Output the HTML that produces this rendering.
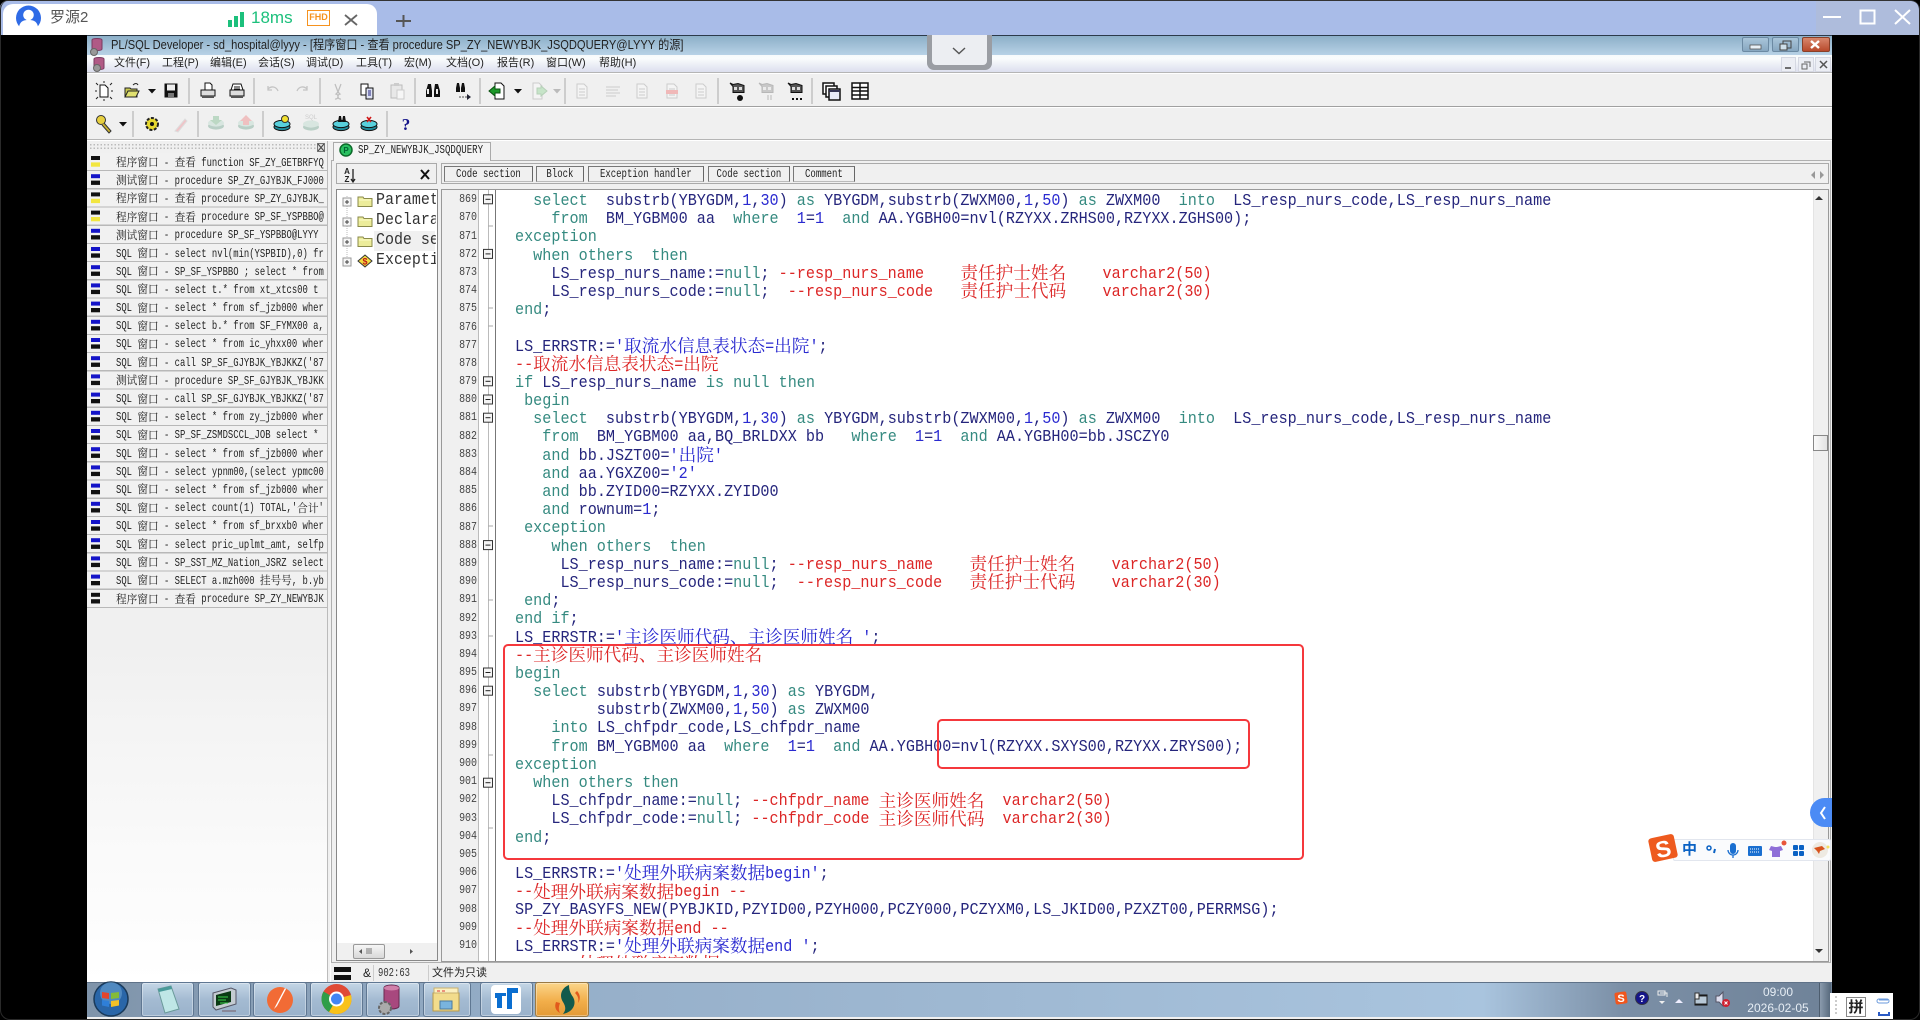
<!DOCTYPE html>
<html lang="zh"><head><meta charset="utf-8"><title>PL/SQL Developer</title>
<style>
html,body{margin:0;padding:0;background:#000}
body{width:1920px;height:1020px;overflow:hidden;position:relative;font-family:"Liberation Sans","Noto Sans CJK SC",sans-serif}
.a{position:absolute;box-sizing:border-box}
.m{position:absolute;top:55px;height:17px;line-height:17px;font-size:11px;color:#222;white-space:nowrap}
.mono{font-family:"Liberation Mono","Noto Serif CJK SC",monospace}
#code{position:absolute;left:19.4px;top:3px;width:1500px;transform:scaleX(.891);transform-origin:0 0;font:17px/18.2px "Liberation Mono",monospace;color:#25257c}
#code div{height:18.2px;white-space:pre}
#code b{font-weight:normal;color:#358a80}
#code em{font-style:normal;color:#2a2ad0}
#code s{text-decoration:none;color:#dc2626}
#code i{font:normal 19.8px/0 "Noto Serif CJK SC",serif;display:inline-block;transform:scaleY(.9);position:relative;top:2.5px}
#list{position:absolute;left:0;top:1px;width:300px;transform:scaleX(.74);transform-origin:0 0;font:12px/18.2px "Liberation Mono",monospace;color:#222}
#list div{height:18.2px;white-space:pre}
#list i{font:normal 14.4px/0 "Noto Serif CJK SC",serif;display:inline-block;transform:scaleY(.78);position:relative;top:1.5px}
#nums{position:absolute;left:442px;top:190.2px;width:35px;text-align:right;font:12px/18.2px "Liberation Mono",monospace;color:#444}
#nums div{height:18.2px;transform:scaleX(.83);transform-origin:100% 0}
.btn{position:absolute;top:166px;height:16px;background:#f0f0f0;border:1px solid #777;border-right-color:#666;border-bottom-color:#bbb;box-sizing:border-box;overflow:hidden}
.btn span{position:absolute;left:0;top:0;width:133%;text-align:center;font:12px/15px "Liberation Mono",monospace;color:#222;transform:scaleX(.75);transform-origin:0 0;white-space:pre}
.tree{position:absolute;left:376px;width:68px;height:20px;overflow:hidden;font:17px/20px "Liberation Mono",monospace;color:#333;white-space:pre;transform:scaleX(.88);transform-origin:0 0}
.tb{position:absolute;top:982px;height:35px;border:1px solid #5f7792;border-radius:3px;box-sizing:border-box;background:linear-gradient(#c4d6e6,#a4bbd2 50%,#9ab2cb);box-shadow:inset 0 0 0 1px rgba(255,255,255,.35)}
.red{position:absolute;border:2.5px solid #f5383c;border-radius:5px;box-sizing:border-box}
</style></head><body>

<!-- remote desktop top bar -->
<div class="a" style="left:0;top:0;width:1920px;height:35px;background:#a9bce8;border-top:1px solid #333;border-radius:8px 10px 0 0"></div>
<div class="a" style="left:1816px;top:1px;width:103px;height:34px;background:#aebcdc;border-radius:0 10px 0 0"></div>
<div class="a" style="left:3px;top:4px;width:374px;height:31px;background:#fff;border-radius:10px 10px 0 0"></div>
<div class="a" style="left:50px;top:8px;font-size:15px;line-height:20px;color:#555">罗源2</div>
<div class="a" style="left:251px;top:8px;font-size:17px;line-height:20px;color:#1cc07c">18ms</div>
<div class="a" style="left:307px;top:10px;width:23px;height:16px;border:1.5px solid #f6921e;font:bold 9px/13px 'Liberation Sans';color:#f6921e;text-align:center">FHD</div>

<!-- app window -->
<div class="a" style="left:87px;top:35px;width:1745px;height:985px;background:#f0f0f0"></div>
<div class="a" style="left:87px;top:35px;width:1745px;height:1px;background:#2c3a4a"></div>
<div class="a" style="left:87px;top:36px;width:1745px;height:19px;background:linear-gradient(#8cafc8,#b8d2e6)"></div>
<div class="a" style="left:111px;top:36px;height:19px;line-height:19px;font-size:12.5px;color:#222;white-space:nowrap;transform:scaleX(.89);transform-origin:0 0">PL/SQL Developer - sd_hospital@lyyy - [程序窗口 - 查看 procedure SP_ZY_NEWYBJK_JSQDQUERY@LYYY 的源]</div>
<div class="a" style="left:87px;top:55px;width:1745px;height:17px;background:linear-gradient(#f6fafb,#fafcfd 20%,#dcdfee)"></div>
<div class="a" style="left:87px;top:72px;width:1745px;height:2px;background:#b5b5b5;border-bottom:1px solid #fff"></div>
<div class="m" style="left:114px">文件(F)</div><div class="m" style="left:162px">工程(P)</div><div class="m" style="left:210px">编辑(E)</div><div class="m" style="left:258px">会话(S)</div><div class="m" style="left:306px">调试(D)</div><div class="m" style="left:356px">工具(T)</div><div class="m" style="left:404px">宏(M)</div><div class="m" style="left:446px">文档(O)</div><div class="m" style="left:497px">报告(R)</div><div class="m" style="left:546px">窗口(W)</div><div class="m" style="left:599px">帮助(H)</div>
<div class="a" style="left:87px;top:106px;width:1745px;height:2px;background:#a0a0a0;border-bottom:1px solid #fff"></div>
<div class="a" style="left:87px;top:139px;width:1745px;height:2px;background:#b5b5b5;border-bottom:1px solid #fff"></div>

<!-- window control buttons -->
<div class="a" style="left:1742px;top:37px;width:27px;height:15px;background:linear-gradient(#a9c5da,#87a7c0);border:1px solid #6c8aa3;border-radius:2px"></div>
<div class="a" style="left:1772px;top:37px;width:27px;height:15px;background:linear-gradient(#a9c5da,#87a7c0);border:1px solid #6c8aa3;border-radius:2px"></div>
<div class="a" style="left:1802px;top:37px;width:28px;height:15px;background:linear-gradient(#d8876c,#b84a2c);border:1px solid #8a4028;border-radius:2px"></div>
<div class="a" style="left:1781px;top:57px;width:15px;height:15px;background:#eceef4;border:1px solid #d5d8e2"></div>
<div class="a" style="left:1798px;top:57px;width:16px;height:15px;background:#eceef4;border:1px solid #d5d8e2"></div>
<div class="a" style="left:1815px;top:57px;width:16px;height:15px;background:#eceef4;border:1px solid #d5d8e2"></div>

<!-- left list -->
<div class="a" style="left:87px;top:141px;width:244px;height:841px;background:linear-gradient(#f0f0f0 60%,#fafafa 85%,#fff)"></div>
<div class="a" style="left:89px;top:143px;width:228px;height:7px;background-image:radial-gradient(#bbb 0.8px,transparent 1px);background-size:3.5px 3.5px"></div>
<div class="a" style="left:87px;top:152.6px;width:240px;height:455px;background:repeating-linear-gradient(#f1f1f1 0,#f1f1f1 17px,#b8b8b8 17px,#b8b8b8 18.2px)"></div>
<div class="a" style="left:327px;top:141px;width:3px;height:841px;background:#f0f0f0;border-left:1px solid #bbb"></div>
<div class="a" style="left:116px;top:152.6px;width:211px;height:456px;overflow:hidden"><div id="list">
<div><i>程序窗口</i> - <i>查看</i> function SF_ZY_GETBRFYQ</div>
<div><i>测试窗口</i> - procedure SP_ZY_GJYBJK_FJ000</div>
<div><i>程序窗口</i> - <i>查看</i> procedure SP_ZY_GJYBJK_</div>
<div><i>程序窗口</i> - <i>查看</i> procedure SP_SF_YSPBBO@</div>
<div><i>测试窗口</i> - procedure SP_SF_YSPBBO@LYYY</div>
<div>SQL <i>窗口</i> - select nvl(min(YSPBID),0) fr</div>
<div>SQL <i>窗口</i> - SP_SF_YSPBBO ; select * from</div>
<div>SQL <i>窗口</i> - select t.* from xt_xtcs00 t</div>
<div>SQL <i>窗口</i> - select * from sf_jzb000 wher</div>
<div>SQL <i>窗口</i> - select b.* from SF_FYMX00 a,</div>
<div>SQL <i>窗口</i> - select * from ic_yhxx00 wher</div>
<div>SQL <i>窗口</i> - call SP_SF_GJYBJK_YBJKKZ('87</div>
<div><i>测试窗口</i> - procedure SP_SF_GJYBJK_YBJKK</div>
<div>SQL <i>窗口</i> - call SP_SF_GJYBJK_YBJKKZ('87</div>
<div>SQL <i>窗口</i> - select * from zy_jzb000 wher</div>
<div>SQL <i>窗口</i> - SP_SF_ZSMDSCCL_JOB select *</div>
<div>SQL <i>窗口</i> - select * from sf_jzb000 wher</div>
<div>SQL <i>窗口</i> - select ypnm00,(select ypmc00</div>
<div>SQL <i>窗口</i> - select * from sf_jzb000 wher</div>
<div>SQL <i>窗口</i> - select count(1) TOTAL,'<i>合计</i>'</div>
<div>SQL <i>窗口</i> - select * from sf_brxxb0 wher</div>
<div>SQL <i>窗口</i> - select pric_uplmt_amt, selfp</div>
<div>SQL <i>窗口</i> - SP_SST_MZ_Nation_JSRZ select</div>
<div>SQL <i>窗口</i> - SELECT a.mzh000 <i>挂号号</i>, b.yb</div>
<div><i>程序窗口</i> - <i>查看</i> procedure SP_ZY_NEWYBJK</div>
</div></div>

<!-- right page control -->
<div class="a" style="left:331px;top:160px;width:1500px;height:803px;background:#f0f0f0;border:1px solid #b0b0b0"></div>
<div class="a" style="left:333px;top:142px;width:158px;height:19px;background:#f4f4f4;border:1px solid #aaa;border-bottom:none"></div>
<div class="a mono" style="left:358px;top:142px;width:180px;font-size:12px;line-height:17px;color:#222;transform:scaleX(.755);transform-origin:0 0;white-space:pre">SP_ZY_NEWYBJK_JSQDQUERY</div>

<!-- tree -->
<div class="a" style="left:336px;top:163px;width:101px;height:21px;background:#f0f0f0;border:1px solid #aaa"></div>
<div class="a" style="left:336px;top:189px;width:102px;height:772px;background:#fff;border:1px solid #888"></div>
<div class="a" style="left:374px;top:231px;width:61px;height:20px;background:#f0f0f0"></div>
<div class="tree" style="top:191px">Parameters</div><div class="tree" style="top:211px">Declarations</div><div class="tree" style="top:231px">Code section</div><div class="tree" style="top:251px">Exception</div>
<div class="a" style="left:337px;top:943px;width:100px;height:17px;background:#f0f0f0"></div>
<div class="a" style="left:353px;top:944px;width:32px;height:15px;background:linear-gradient(#f6f6f6,#d8d8d8);border:1px solid #999;border-radius:2px"></div>

<!-- section buttons -->
<div class="a" style="left:441px;top:163px;width:1388px;height:21px;background:#f0f0f0;border:1px solid #aaa"></div>
<div class="btn" style="left:444px;width:89px"><span>Code section</span></div>
<div class="btn" style="left:536px;width:48px"><span>Block</span></div>
<div class="btn" style="left:588px;width:116px"><span>Exception handler</span></div>
<div class="btn" style="left:708px;width:82px"><span>Code section</span></div>
<div class="btn" style="left:793px;width:62px"><span>Comment</span></div>

<!-- editor -->
<div class="a" style="left:441px;top:189px;width:1388px;height:773px;background:#fff;border:1px solid #999"></div>
<div class="a" style="left:442px;top:190px;width:37px;height:771px;background:#f0f0f0;border-right:1px solid #bbb"></div>
<div class="a" style="left:479px;top:190px;width:17px;height:771px;background:#fff;border-right:1.5px solid #777"></div>
<div class="a" style="left:488px;top:190px;width:1px;height:771px;background:#bbb"></div>
<div class="a" style="left:1813px;top:190px;width:15px;height:771px;background:#f0f0f0;border-left:1px solid #e4e4e4"></div>
<div class="a" style="left:1813px;top:435px;width:15px;height:16px;background:linear-gradient(90deg,#fafafa,#e2e2e2);border:1px solid #888"></div>
<div id="nums"><div>869</div><div>870</div><div>871</div><div>872</div><div>873</div><div>874</div><div>875</div><div>876</div><div>877</div><div>878</div><div>879</div><div>880</div><div>881</div><div>882</div><div>883</div><div>884</div><div>885</div><div>886</div><div>887</div><div>888</div><div>889</div><div>890</div><div>891</div><div>892</div><div>893</div><div>894</div><div>895</div><div>896</div><div>897</div><div>898</div><div>899</div><div>900</div><div>901</div><div>902</div><div>903</div><div>904</div><div>905</div><div>906</div><div>907</div><div>908</div><div>909</div><div>910</div></div>
<div class="a" style="left:496px;top:190px;width:1317px;height:768px;overflow:hidden"><div id="code">
<div>  <b>select</b>  substrb(YBYGDM,<em>1</em>,<em>30</em>) <b>as</b> YBYGDM,substrb(ZWXM00,<em>1</em>,<em>50</em>) <b>as</b> ZWXM00  <b>into</b>  LS_resp_nurs_code,LS_resp_nurs_name</div>
<div>    <b>from</b>  BM_YGBM00 aa  <b>where</b>  <em>1</em>=<em>1</em>  <b>and</b> AA.YGBH00=nvl(RZYXX.ZRHS00,RZYXX.ZGHS00);</div>
<div><b>exception</b></div>
<div>  <b>when others  then</b></div>
<div>    LS_resp_nurs_name:=<b>null</b>; <s>--resp_nurs_name    <i>责任护士姓名</i>    varchar2(50)</s></div>
<div>    LS_resp_nurs_code:=<b>null</b>;  <s>--resp_nurs_code   <i>责任护士代码</i>    varchar2(30)</s></div>
<div><b>end</b>;</div>
<div> </div>
<div>LS_ERRSTR:=<em>'<i>取流水信息表状态</i>=<i>出院</i>'</em>;</div>
<div><s>--<i>取流水信息表状态</i>=<i>出院</i></s></div>
<div><b>if</b> LS_resp_nurs_name <b>is null then</b></div>
<div> <b>begin</b></div>
<div>  <b>select</b>  substrb(YBYGDM,<em>1</em>,<em>30</em>) <b>as</b> YBYGDM,substrb(ZWXM00,<em>1</em>,<em>50</em>) <b>as</b> ZWXM00  <b>into</b>  LS_resp_nurs_code,LS_resp_nurs_name</div>
<div>   <b>from</b>  BM_YGBM00 aa,BQ_BRLDXX bb   <b>where</b>  <em>1</em>=<em>1</em>  <b>and</b> AA.YGBH00=bb.JSCZY0</div>
<div>   <b>and</b> bb.JSZT00=<em>'<i>出院</i>'</em></div>
<div>   <b>and</b> aa.YGXZ00=<em>'2'</em></div>
<div>   <b>and</b> bb.ZYID00=RZYXX.ZYID00</div>
<div>   <b>and</b> rownum=<em>1</em>;</div>
<div> <b>exception</b></div>
<div>    <b>when others  then</b></div>
<div>     LS_resp_nurs_name:=<b>null</b>; <s>--resp_nurs_name    <i>责任护士姓名</i>    varchar2(50)</s></div>
<div>     LS_resp_nurs_code:=<b>null</b>;  <s>--resp_nurs_code   <i>责任护士代码</i>    varchar2(30)</s></div>
<div> <b>end</b>;</div>
<div><b>end if</b>;</div>
<div>LS_ERRSTR:=<em>'<i>主诊医师代码、主诊医师姓名</i> '</em>;</div>
<div><s>--<i>主诊医师代码、主诊医师姓名</i></s></div>
<div><b>begin</b></div>
<div>  <b>select</b> substrb(YBYGDM,<em>1</em>,<em>30</em>) <b>as</b> YBYGDM,</div>
<div>         substrb(ZWXM00,<em>1</em>,<em>50</em>) <b>as</b> ZWXM00</div>
<div>    <b>into</b> LS_chfpdr_code,LS_chfpdr_name</div>
<div>    <b>from</b> BM_YGBM00 aa  <b>where</b>  <em>1</em>=<em>1</em>  <b>and</b> AA.YGBH00=nvl(RZYXX.SXYS00,RZYXX.ZRYS00);</div>
<div><b>exception</b></div>
<div>  <b>when others then</b></div>
<div>    LS_chfpdr_name:=<b>null</b>; <s>--chfpdr_name <i>主诊医师姓名</i>  varchar2(50)</s></div>
<div>    LS_chfpdr_code:=<b>null</b>; <s>--chfpdr_code <i>主诊医师代码</i>  varchar2(30)</s></div>
<div><b>end</b>;</div>
<div> </div>
<div>LS_ERRSTR:=<em>'<i>处理外联病案数据</i>begin'</em>;</div>
<div><s>--<i>处理外联病案数据</i>begin --</s></div>
<div>SP_ZY_BASYFS_NEW(PYBJKID,PZYID00,PZYH000,PCZY000,PCZYXM0,LS_JKID00,PZXZT00,PERRMSG);</div>
<div><s>--<i>处理外联病案数据</i>end --</s></div>
<div>LS_ERRSTR:=<em>'<i>处理外联病案数据</i>end '</em>;</div>
<div>     <s>--<i>处理外联病案数据</i></s></div>
</div></div>
<div class="red" style="left:503px;top:644px;width:801px;height:216px"></div>
<div class="red" style="left:937px;top:719px;width:313px;height:50px"></div>

<!-- status bar -->
<div class="a" style="left:331px;top:963px;width:1501px;height:19px;background:#f0f0f0"></div>
<div class="a" style="left:363px;top:964px;font-size:12px;line-height:18px;color:#222">&amp;</div>
<div class="a mono" style="left:378px;top:964px;font-size:12px;line-height:18px;color:#333;transform:scaleX(.74);transform-origin:0 0">902:63</div>
<div class="a" style="left:432px;top:964px;font-size:11px;line-height:18px;color:#222">文件为只读</div>
<div class="a" style="left:373px;top:965px;width:1px;height:16px;background:#ccc"></div>
<div class="a" style="left:428px;top:965px;width:1px;height:16px;background:#ccc"></div>

<!-- taskbar -->
<div class="a" style="left:87px;top:982px;width:1745px;height:35px;background:linear-gradient(90deg,#7f94aa 0,#95aec8 25%,#a9c4de 80%,#7b8fa6 88%,#6f8298 100%);border-top:1px solid #5f7288"></div>
<div class="tb" style="left:141px;width:53px"></div><div class="tb" style="left:198px;width:53px"></div><div class="tb" style="left:253px;width:54px"></div><div class="tb" style="left:310px;width:53px"></div><div class="tb" style="left:366px;width:54px"></div><div class="tb" style="left:423px;width:48px"></div><div class="tb" style="left:480px;width:53px"></div>
<div class="tb" style="left:535px;width:54px;background:linear-gradient(#fbd58a,#f2ae4a 55%,#e39a36);border-color:#9a7a44"></div>
<div class="a" style="left:1819px;top:983px;width:12px;height:34px;background:linear-gradient(90deg,#8a9bad,#55677a);border-left:1px solid #4d5d6e"></div>
<div class="a" style="left:1740px;top:985px;width:76px;text-align:center;font-size:12px;line-height:15px;color:#e6edf4">09:00</div>
<div class="a" style="left:1740px;top:1001px;width:76px;text-align:center;font-size:12px;line-height:15px;color:#e6edf4">2026-02-05</div>

<!-- floating collapse handle -->
<div class="a" style="left:927px;top:35px;width:65px;height:35px;background:#9a9da3;border-radius:0 0 7px 7px"></div>
<div class="a" style="left:932px;top:35px;width:55px;height:30px;background:#eceef2;border-radius:0 0 4px 4px"></div>

<!-- IME bar -->
<div class="a" style="left:1673px;top:839px;width:158px;height:22px;background:#fafbfd;border:1px solid #e2e6ee;border-radius:2px"></div>
<div class="a" style="left:1810px;top:798px;width:22px;height:29px;background:#4b8bf5;border-radius:15px 0 0 15px"></div>
<div class="a" style="left:1682px;top:840px;font-size:15px;font-weight:bold;line-height:20px;color:#0b62c4">中</div>
<div class="a" style="left:1830px;top:993px;width:63px;height:27px;background:#fff"></div>
<div class="a" style="left:1846px;top:997px;width:20px;height:20px;border:1px solid #888;font:bold 15px/18px 'Noto Sans CJK SC',sans-serif;color:#222;text-align:center">拼</div>

<!-- icons -->
<svg class="a" style="left:0;top:0" width="1920" height="1020" viewBox="0 0 1920 1020" fill="none">
<defs>
<g id="dd"><path d="M-4 -2h8l-4 4.5z" fill="#111"/></g>
<g id="ddg"><path d="M-4 -2h8l-4 4.5z" fill="#bbb"/></g>
<g id="rb"><rect x="91" y="-5.7" width="9" height="4" fill="#1414c8"/><rect x="91" y=".7" width="9" height="4.3" fill="#111"/></g>
<g id="ry"><rect x="91" y="-5.7" width="9" height="4" fill="#111"/><rect x="91" y=".7" width="9" height="4.3" fill="#f2e640"/></g>
<g id="rk"><rect x="91" y="-5.7" width="9" height="4" fill="#111"/><rect x="91" y=".7" width="9" height="4.3" fill="#111"/></g>
<g id="fold"><rect x="-4.5" y="-4.5" width="9" height="9" fill="#f4f4f4" stroke="#333"/><path d="M-2.5 0h5" stroke="#222"/></g>
<g id="pl"><rect x="-4" y="-4" width="8" height="8" fill="#f6f6f6" stroke="#999"/><path d="M-2 0h4M0 -2v4" stroke="#444"/></g>
<g id="fld"><path d="M-7 -4h5l1 1.5h8v8h-14z" fill="#ecec9a" stroke="#8a8a4a"/><path d="M-6 -1h12" stroke="#fbfbc8"/></g>
<g id="db"><ellipse cx="0" cy="4" rx="8" ry="3.6" fill="#1f8a9a" stroke="#111"/><ellipse cx="0" cy="1" rx="8" ry="3.6" fill="#58d0dc" stroke="#111"/></g>
<g id="dbg"><ellipse cx="0" cy="4" rx="8" ry="3.6" fill="#b9cfc6"/><ellipse cx="0" cy="1" rx="8" ry="3.6" fill="#d8e6e0"/></g>
<g id="film"><path d="M-7 -8l3 1.5 5-1 6 2v7h-11v-6z" fill="#555" stroke="#111"/><rect x="-3" y="-4" width="3" height="3" fill="#ddd"/><rect x="2" y="-4" width="3" height="3" fill="#ddd"/></g>
<g id="gdoc" stroke="#ccc"><path d="M-5 -7h7l3 3v11h-10z" fill="#f4f4f4"/><path d="M-3 -2h6M-3 1h6M-3 4h6"/></g>
</defs>

<!-- top bar glyphs -->
<circle cx="28.5" cy="18" r="12.5" fill="#2f6be6"/>
<circle cx="28.5" cy="15" r="5.3" fill="#fff"/><path d="M19 27c1-6 5-7 9.5-7s8.500 1 9.500 7a12 12 0 0 1-19 0z" fill="#fff"/>
<path d="M228 20h4v7h-4zM234 16h4v11h-4zM240 12h4v15h-4z" fill="#1cc07c"/>
<path d="M345 15l12 10M357 15l-12 10" stroke="#666" stroke-width="1.8"/>
<path d="M396 21h15M403.500 15v12" stroke="#555" stroke-width="2"/>
<path d="M1823 17h18" stroke="#fff" stroke-width="2"/><rect x="1860.500" y="10.500" width="14" height="13" stroke="#fff" stroke-width="2"/><path d="M1895 10l15 14M1910 10l-15 14" stroke="#fff" stroke-width="2"/>
<path d="M953 48l6 5.500 6-5.500" stroke="#555" stroke-width="1.400"/>

<!-- title icons and controls -->
<path d="M92 40c0-2 10-2 10 0v9c0 2-10 2-10 0z" fill="#b05a86" stroke="#7a3a60"/><circle cx="94" cy="52" r="3.500" fill="#999" stroke="#666"/>
<path d="M94 59c0-2 10-2 10 0v9c0 2-10 2-10 0z" fill="#b05a86" stroke="#7a3a60"/><circle cx="97" cy="68" r="3.500" fill="#999" stroke="#666"/>
<rect x="1750" y="45" width="11" height="4" fill="#e8f0f6" stroke="#555" stroke-width=".8"/>
<rect x="1783" y="41" width="8" height="7" fill="none" stroke="#444"/><rect x="1780" y="44" width="7" height="6" fill="#cfdfea" stroke="#444"/>
<path d="M1811 41l8 7M1819 41l-8 7" stroke="#fff" stroke-width="2.400"/>
<path d="M1785 68h6" stroke="#444" stroke-width="1.500"/><path d="M1804 62h6v5M1802 64h5v5h-5z" stroke="#666"/><path d="M1820 61l7 7M1827 61l-7 7" stroke="#555" stroke-width="1.500"/>

<!-- toolbar separators -->
<path d="M189 78v26M254 78v26M320 78v26M415 78v26M480 78v26M565 78v26M718 78v26M812 78v26M133 111v26M198 111v26M263 111v26M387 111v26" stroke="#aaa"/>

<!-- toolbar 1 -->
<g transform="translate(104 91)"><path d="M-4 -6h5l3 3v9h-8z" fill="#fff" stroke="#111"/><path d="M-8 -8l2 2M8 -8l-2 2M-8 8l2-2M8 8l-2-2M0 -10v2M0 8v2M-9 0h2M7 0h2" stroke="#222"/></g>
<g transform="translate(132 91)"><path d="M-7 -3h5l1 1h6v8h-12z" fill="#c8c850" stroke="#222"/><path d="M-7 6l3-6h11l-3 6z" fill="#e0e070" stroke="#222"/><path d="M1 -6c2-2 4-2 5 0" stroke="#222"/></g>
<use href="#dd" x="152" y="91"/>
<g transform="translate(171 91)"><rect x="-6.500" y="-7.500" width="13" height="14" fill="#111"/><rect x="-4" y="-6.500" width="8" height="6" fill="#eee"/><rect x="-3" y="2" width="6" height="4" fill="#777"/></g>
<g transform="translate(208 91)"><path d="M-3 -8h5l2 2v5h-7z" fill="#fff" stroke="#111"/><rect x="-7" y="-1" width="14" height="6" fill="#ddd" stroke="#111"/><rect x="-6" y="5" width="12" height="2" fill="#555"/></g>
<g transform="translate(237 91)"><path d="M-4 -7h8l2 6h-12z" fill="#fff" stroke="#111"/><path d="M-3 -4h6M-3 -2h6" stroke="#111"/><rect x="-7" y="-1" width="14" height="6" fill="#ddd" stroke="#111"/><rect x="-6" y="5" width="12" height="2" fill="#555"/></g>
<path d="M268 89c3-3 8-3 10 2M268 86v4h4M307 89c-3-3-8-3-10 2M307 86v4h-4" stroke="#c4c4c4" stroke-width="1.300"/>
<path d="M335 84l3 8 3-8M335 99a2.500 2.500 0 1 0 1-5l2-2 2 2a2.500 2.500 0 1 0 1 5" stroke="#bdbdbd" stroke-width="1.200"/>
<g transform="translate(367 91)"><path d="M-6 -7h7v11h-7z" fill="#fff" stroke="#111"/><path d="M-1 -3h7v11h-7z" fill="#dfe3f4" stroke="#111"/><path d="M1 0h3M1 2h3M1 4h3" stroke="#23237e"/></g>
<g transform="translate(397 91)"><rect x="-6" y="-6" width="11" height="13" fill="#e8e8e8" stroke="#bbb"/><rect x="-3" y="-8" width="5" height="3" fill="#ccc"/><path d="M0 -1h7v9h-7z" fill="#f6f6f6" stroke="#ccc"/></g>
<g transform="translate(433 91)" fill="#111"><path d="M-7 0l2-7h3l1 7v6h-6zM1 0l1-7h3l2 7v6h-6z"/><rect x="-6" y="-2" width="2" height="5" fill="#eee"/><rect x="3" y="-2" width="2" height="5" fill="#eee"/></g>
<g transform="translate(460 88)" fill="#111"><path d="M-4 0l1-5h2l1 5v4h-4zM1 0l1-5h2l1 5v4h-4z"/></g><path d="M459 97h10" stroke="#555" stroke-dasharray="2 1"/><path d="M467 94l4 3-4 3z" fill="#223"/>
<g transform="translate(498 91)"><path d="M-3 -8h6l3 3v13h-9z" fill="#fff" stroke="#111"/><path d="M-9 0l6-5v3h5v4h-5v3z" fill="#1d9a2a" stroke="#0a5010"/></g>
<use href="#dd" x="518" y="91"/>
<g transform="translate(539 91)"><path d="M-6 -8h6l3 3v13h-9z" fill="#f4f4f4" stroke="#ccc"/><path d="M-2 -3h4v-2l6 5-6 5v-2h-4z" fill="#c6e4c8" stroke="#b6d0b8"/></g>
<use href="#ddg" x="557" y="91"/>
<use href="#gdoc" x="582" y="91"/><path d="M606 87h14M606 90h12M606 93h14M606 96h10" stroke="#ccc"/><use href="#gdoc" x="642" y="91"/><use href="#gdoc" x="672" y="91"/><rect x="666" y="90" width="12" height="4" fill="#f0b8b8"/><use href="#gdoc" x="701" y="91"/>
<use href="#film" x="737" y="91"/><circle cx="740" cy="98" r="3" fill="#111"/>
<use href="#film" x="766" y="91" opacity=".25"/><path d="M768 95v5M771 95v5" stroke="#ccc" stroke-width="1.500"/>
<use href="#film" x="795" y="91"/><path d="M792 99h2M796 99h2M800 99h2" stroke="#111" stroke-width="2"/>
<g transform="translate(831 91)"><rect x="-8" y="-8" width="11" height="11" fill="#fff" stroke="#111" stroke-width="1.500"/><rect x="-5" y="-5" width="11" height="11" fill="#fff" stroke="#111" stroke-width="1.500"/><rect x="-2" y="-2" width="11" height="11" fill="#e6e8f8" stroke="#111" stroke-width="1.500"/><path d="M-2 0h11" stroke="#335" stroke-width="2"/></g>
<g transform="translate(860 91)"><rect x="-8" y="-8" width="16" height="16" fill="#fff" stroke="#111" stroke-width="1.500"/><path d="M-8 -3.500h16M-8 0h16M-8 4h16M0 -8v16" stroke="#111" stroke-width="1.500"/></g>

<!-- toolbar 2 -->
<g transform="translate(104 124)"><circle cx="-3" cy="-4" r="4.500" fill="#e8d040" stroke="#333"/><path d="M0 -1l7 8-2 2-7-8" fill="#c8b030" stroke="#333"/></g>
<use href="#dd" x="123" y="124"/>
<g transform="translate(152 124)"><circle r="6" fill="#e6d830" stroke="#222" stroke-width="2" stroke-dasharray="3 1.500"/><circle r="2" fill="#111"/></g>
<path d="M175 131l10-12 2 2-9 11z" fill="#efc4c8" stroke="#ddd"/>
<g transform="translate(216 122)"><use href="#dbg"/><path d="M-3 -6h6v4h3l-6 5-6-5h3z" fill="#bcd8c4"/></g>
<g transform="translate(246 122)"><use href="#dbg"/><path d="M-3 3h6v-4h3l-6-6-6 6h3z" fill="#efc0c0"/></g>
<g transform="translate(282 123)"><use href="#db"/><circle cx="3" cy="-4" r="3.500" fill="#f2e030" stroke="#333"/></g>
<g transform="translate(311 123)"><use href="#dbg"/><text x="0" y="-4" font-family="Liberation Sans" font-size="6" fill="#ccc" text-anchor="middle">SQL</text></g>
<g transform="translate(341 123)"><use href="#db"/><path d="M-3 -1l1-6h2l1 6zM1 -1l1-6h2l1 6z" fill="#111"/></g>
<g transform="translate(369 123)"><use href="#db"/><path d="M-2 -6l4 5M2 -6l-4 5" stroke="#d01818" stroke-width="1.600"/></g>
<text x="406" y="130" font-family="Liberation Serif" font-weight="bold" font-size="17" fill="#15158a" text-anchor="middle">?</text>

<!-- grip close -->
<rect x="317.500" y="143.500" width="7" height="8" fill="#ddd" stroke="#777"/><path d="M318 144l6 7M324 144l-6 7" stroke="#444"/>

<!-- list row icons -->
<use href="#ry" y="161.700"/><use href="#rb" y="179.900"/><use href="#ry" y="198.100"/><use href="#ry" y="216.300"/><use href="#rb" y="234.500"/><use href="#rb" y="252.700"/><use href="#rb" y="270.900"/><use href="#rb" y="289.100"/><use href="#rb" y="307.300"/><use href="#rb" y="325.500"/><use href="#rb" y="343.700"/><use href="#rb" y="361.900"/><use href="#rb" y="380.100"/><use href="#rb" y="398.300"/><use href="#rb" y="416.500"/><use href="#rb" y="434.700"/><use href="#rb" y="452.900"/><use href="#rb" y="471.100"/><use href="#rb" y="489.300"/><use href="#rb" y="507.500"/><use href="#rb" y="525.700"/><use href="#rb" y="543.900"/><use href="#rb" y="562.100"/><use href="#rb" y="580.300"/><use href="#rk" y="598.500"/>

<!-- editor tab icon -->
<circle cx="346" cy="150" r="6" fill="#2ac060" stroke="#0c6a2a" stroke-width="1.500"/><text x="346" y="153" font-family="Liberation Sans" font-size="8" font-weight="bold" fill="#063" text-anchor="middle">P</text>

<!-- tree toolbar and tree -->
<text x="347" y="174" font-family="Liberation Sans" font-size="8" font-weight="bold" fill="#222" text-anchor="middle">A</text><text x="347" y="182" font-family="Liberation Sans" font-size="8" font-weight="bold" fill="#222" text-anchor="middle">Z</text>
<path d="M353 169v12M351 179l2 3 2-3" stroke="#222" stroke-width="1.300"/><path d="M421 170l8 9M429 170l-8 9" stroke="#111" stroke-width="2"/>
<path d="M347 196v65" stroke="#bbb" stroke-dasharray="1 1"/>
<use href="#pl" x="347" y="202"/><use href="#pl" x="347" y="222"/><use href="#pl" x="347" y="242"/><use href="#pl" x="347" y="262"/>
<use href="#fld" x="365" y="201"/><use href="#fld" x="365" y="221"/><use href="#fld" x="365" y="241"/>
<g transform="translate(365 261)"><path d="M-7 0l7-6 7 6-7 6z" fill="#f2dc40" stroke="#333"/><text y="3.500" font-family="Liberation Sans" font-size="9" font-weight="bold" fill="#c01818" text-anchor="middle">$</text></g>
<path d="M362 949l-3 2.500 3 2.500zM410 949l3 2.500-3 2.500z" fill="#555"/><path d="M367 948v6M369 948v6M371 948v6" stroke="#777"/>

<!-- section arrows, scrollbar arrows -->
<path d="M1815 171l-4 4 4 4zM1820 171l4 4-4 4z" fill="#999"/>
<path d="M1819 196l-4 4h8zM1815 949h8l-4 4z" fill="#333"/>

<!-- fold markers -->
<use href="#fold" x="488" y="199.300"/><use href="#fold" x="488" y="253.900"/><use href="#fold" x="488" y="381.300"/><use href="#fold" x="488" y="399.500"/><use href="#fold" x="488" y="417.700"/><use href="#fold" x="488" y="545.100"/><use href="#fold" x="488" y="672.500"/><use href="#fold" x="488" y="690.700"/><use href="#fold" x="488" y="782.700"/>
<path d="M488 226h5M488 308h5M488 326h5M488 526h5M488 600h5M488 636h5M488 755h5M488 828h5" stroke="#aaa"/>

<!-- status icon -->
<rect x="334" y="967" width="17" height="5" fill="#111"/><rect x="334" y="975" width="17" height="5" fill="#111"/>

<!-- taskbar icons -->
<circle cx="111" cy="999" r="17" fill="#2a66a8" stroke="#1a3a5a" stroke-width="1.500"/><circle cx="111" cy="993" r="11" fill="#7fb4de" opacity=".45"/>
<path d="M102 992l7 1v6l-7-1z" fill="#e2452c"/><path d="M111 993l8-1v6l-8 1z" fill="#84bb3a"/><path d="M102 1000l7 1v6l-7-1.500z" fill="#2f7fd8"/><path d="M111 1001l8-1v5.500l-8 1.500z" fill="#f4c128"/>
<path d="M158 989l13-3 8 23-14 4z" fill="#bfe6e6" stroke="#6a9a9a"/><path d="M158 989l13-3 1 3-13 3z" fill="#4a9a9a"/>
<path d="M213 993l18-5 5 2v14l-20 6-3-3z" fill="#c4ccd2" stroke="#556"/><path d="M216 995l15-4v11l-15 4z" fill="#0a3a14"/><path d="M218 997h10M218 1000h8M220 1003h8" stroke="#3ad04a"/><path d="M222 1011h14" stroke="#889" stroke-width="2"/>
<circle cx="280" cy="1000" r="13" fill="#f26b35"/><path d="M285 988l-9 17-2 4 3-3 9-17z" fill="#fff"/>
<circle cx="336.500" cy="999" r="15" fill="#e04a35"/><path d="M336.500 999L323.500 991.500A15 15 0 0 0 329 1012z" fill="#2f9e48"/><path d="M336.500 999L329 1012A15 15 0 0 0 351 995 L336.500 999z" fill="#f8c21a"/><circle cx="336.500" cy="999" r="7.500" fill="#fff"/><circle cx="336.500" cy="999" r="5.500" fill="#4285f4"/>
<path d="M384 988c0-4 15-4 15 0v18c0 4-15 4-15 0z" fill="#a8487e" stroke="#6a2a50"/><ellipse cx="391.500" cy="988" rx="7.500" ry="2.500" fill="#d080aa"/><circle cx="385" cy="1008" r="6" fill="#aaa" stroke="#666" stroke-width="2" stroke-dasharray="3 1.500"/>
<path d="M433 993h26v18h-26z" fill="#f2dc8c" stroke="#b89a4a"/><path d="M434 988h24v5h-24z" fill="#fbf0c0" stroke="#c8b070"/><rect x="440" y="1001" width="12" height="8" fill="#79b4de" stroke="#4a7aa0"/><path d="M437 991h3M442 991h3" stroke="#d33"/>
<rect x="491" y="985" width="30" height="29" rx="4" fill="#fff"/><path d="M495 993h11v3h-4v12h-5v-10h-2zM507 988h11v5h-6v16h-5z" fill="#0a6ed0"/>
<path d="M569 985c-8 3-10 11-6 17 3 5 3 8 0 12 10-2 14-10 10-17-3-4-4-8-4-12z" fill="#115a4c"/><path d="M556 1002c-2 5 0 9 4 11-2-4-1-7 0-10zM575 993c3 3 4 6 3 10 3-4 2-9-1-12z" fill="#e25a1c"/>

<!-- tray -->
<rect x="1615" y="992" width="12" height="12" rx="2" fill="#f0561e" transform="rotate(-8 1621 998)"/><text x="1621" y="1002" font-family="Liberation Sans" font-size="11" font-weight="bold" fill="#fff" text-anchor="middle">S</text>
<circle cx="1642" cy="998" r="6.500" fill="#15158a" stroke="#334"/><text x="1642" y="1002" font-family="Liberation Sans" font-size="10" font-weight="bold" fill="#fff" text-anchor="middle">?</text>
<path d="M1658 991h7v4h-7zM1660 993h7v4" stroke="#eee"/><path d="M1659 1001h6l-3 3z" fill="#eee"/>
<path d="M1675 1003h8l-4-4z" fill="#eef"/>
<rect x="1695" y="995" width="12" height="10" fill="#999" stroke="#111"/><rect x="1695" y="996" width="12" height="8" fill="#b8c8d6" stroke="#222"/><rect x="1695" y="993" width="4" height="6" fill="#eee" stroke="#333"/>
<path d="M1716 996h3l4-4v14l-4-4h-3z" fill="#dde" stroke="#556"/><circle cx="1726" cy="1003" r="4" fill="#d02030"/><path d="M1724.500 1001.500l3 3M1727.500 1001.500l-3 3" stroke="#fff"/>

<!-- blue handle & sogou -->
<path d="M1825 807l-4 6 4 6" stroke="#fff" stroke-width="2"/>
<g transform="rotate(-12 1663 848)"><rect x="1650" y="836" width="26" height="24" rx="3" fill="#ee5a1e"/><text x="1663" y="857" font-family="Liberation Sans" font-size="23" font-weight="bold" fill="#fff" text-anchor="middle">S</text></g>
<circle cx="1709" cy="848" r="2" stroke="#0b62c4" stroke-width="1.500"/><path d="M1715 849l-1 4" stroke="#0b62c4" stroke-width="2"/>
<rect x="1730" y="843" width="6" height="11" rx="3" fill="#1a6fd0"/><path d="M1728 850a5 5 0 0 0 10 0M1733 855v3" stroke="#1a6fd0" stroke-width="1.300"/>
<rect x="1748" y="846" width="14" height="10" rx="1" fill="#1a6fd0"/><path d="M1750 849h10M1750 852h10" stroke="#fff" stroke-dasharray="1 1"/>
<path d="M1771 846l4 1h2l4-1 2 4-3 1v6h-8v-6l-3-1z" fill="#8f6fd8"/><circle cx="1784" cy="843" r="2.500" fill="#e8553a"/>
<rect x="1793" y="845" width="5" height="5" rx="1" fill="#0b62c4"/><rect x="1799" y="845" width="5" height="5" rx="1" fill="#0b62c4"/><rect x="1793" y="851" width="5" height="5" rx="1" fill="#0b62c4"/><rect x="1799" y="851" width="5" height="5" rx="1" fill="#0b62c4"/>
<circle cx="1820" cy="850" r="8" fill="#eeeae2"/><path d="M1814 848l8-2 3 3-5 2-1 3-2-3z" fill="#d8541e"/><circle cx="1828" cy="847" r="1.500" fill="#f4e060"/>

<!-- IME box -->
<path d="M1836 996v20" stroke="#ccc" stroke-width="2" stroke-dasharray="2 2"/>
<path d="M1879 1000h9M1879 999a2 2 0 0 0 0 4h8a2 2 0 0 0 0-4z" stroke="#6a9adc"/>
<path d="M1879 1012v3h10v-3" stroke="#2a5ac4" stroke-width="2"/>
</svg>

<div class="a" style="left:0;top:0;width:1920px;height:1020px;border:1px solid #2a2a2a;border-top:none;border-radius:10px;pointer-events:none"></div>
</body></html>
